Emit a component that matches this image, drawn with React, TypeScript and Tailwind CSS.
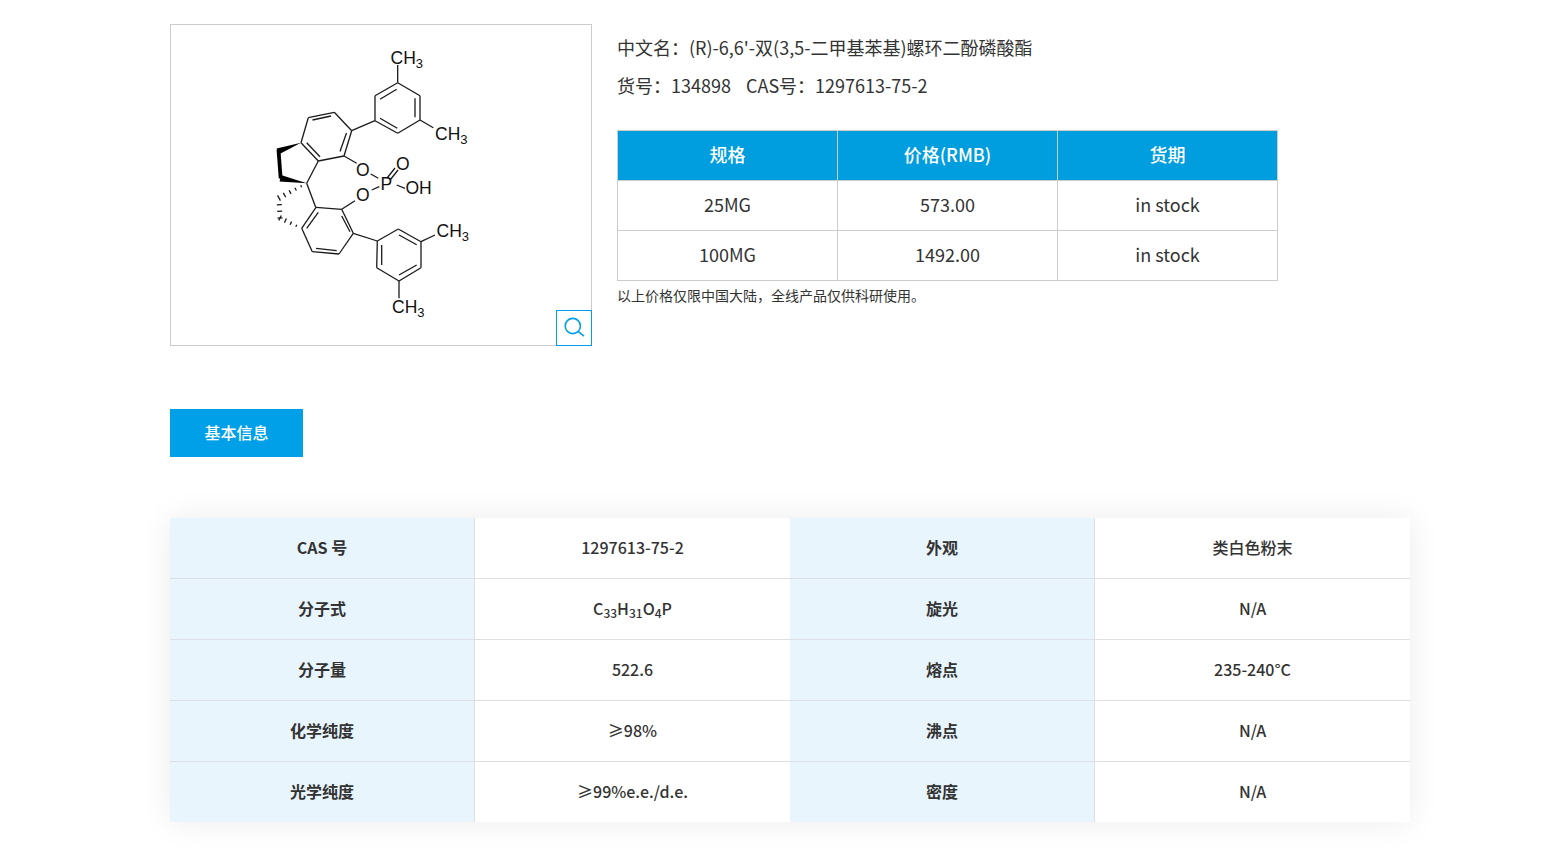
type Pt = [number, number];

// ring bonds + inner double bonds of the structure, in page coordinates
const bonds: [number, number, number, number][] = [
  // top aryl
  [397.7, 82.7, 420, 95.7], [420, 95.7, 420, 120], [420, 120, 397.7, 133.3], [397.7, 133.3, 375, 120.7], [375, 120.7, 375, 95.7], [375, 95.7, 397.7, 82.7],
  [380, 99.3, 396.7, 89.3], [415, 98.3, 415, 117.3], [380, 118.3, 397.3, 128.3],
  [397.7, 82.7, 397.7, 65], [420, 120, 433.3, 127.7], [375, 120.7, 351.7, 130.7],
  // upper benzo ring
  [351.7, 130.7, 334.3, 112.3], [334.3, 112.3, 308.3, 117.7], [308.3, 117.7, 301, 142.7], [301, 142.7, 318.3, 161], [318.3, 161, 344, 156], [344, 156, 351.7, 130.7],
  [312.5, 120, 331, 116], [346.5, 133, 340, 151.5], [306.7, 142.7, 320, 156.7],
  [318.3, 161, 306.7, 183.3], [306.7, 183.3, 315.7, 207.3],
  // lower benzo ring
  [316, 207.3, 341.7, 209.3], [341.7, 209.3, 353.3, 233.3], [353.3, 233.3, 339, 254], [339, 254, 312.3, 251.7], [312.3, 251.7, 301.7, 228.3], [301.7, 228.3, 316, 207.3],
  [306.7, 228.3, 318.3, 212.3], [316, 248.3, 336.7, 250.7], [341.7, 216, 350, 231.7],
  // lower aryl
  [353.3, 233.3, 377.3, 241],
  [377.3, 241, 398.3, 229], [398.3, 229, 421, 241.7], [421, 241.7, 421, 267.7], [421, 267.7, 399, 281], [399, 281, 376.7, 267.7], [376.7, 267.7, 377.3, 241],
  [381.7, 245, 381.7, 265], [399, 235, 416.7, 244.7], [399, 275, 416.7, 265],
  [421, 241.7, 435, 235], [399, 281, 399, 298.3],
  // phosphate
  [344, 156, 356.7, 163.3], [370.7, 174, 378.3, 178.3], [341.7, 209.3, 355, 200.7], [371.7, 190, 379.3, 186.7],
  [387.5, 177.5, 395, 168], [390.5, 179.5, 398, 170], [396.7, 185, 405, 188.3],
];

// hash marks across a bond, widening from a to b
function hashes(a: Pt, b: Pt, n: number, w0: number, w1: number) {
  const dx = b[0] - a[0];
  const dy = b[1] - a[1];
  const len = Math.hypot(dx, dy);
  const out: [number, number, number, number][] = [];
  for (let i = 1; i <= n; i++) {
    const t = i / n;
    const w = w0 + (w1 - w0) * t;
    const x = a[0] + dx * t;
    const y = a[1] + dy * t;
    out.push([x - (dy / len) * w, y + (dx / len) * w, x + (dy / len) * w, y - (dx / len) * w]);
  }
  return out;
}

const hashed = [
  ...hashes([306.7, 183.3], [279, 198], 5, 0.6, 3),
  ...hashes([279, 198], [280, 218], 3, 2.5, 2.5),
  ...hashes([301.7, 228.3], [280, 218], 4, 0.6, 2.8),
];

function Ch3({ x, y }: { x: number; y: number }) {
  return (
    <text x={x} y={y} fontSize={17.5} fill="#111" fontFamily="'Liberation Sans', sans-serif">
      CH<tspan fontSize={13} dy={4}>3</tspan>
    </text>
  );
}

function Atom({ x, y, label }: { x: number; y: number; label: string }) {
  return (
    <text x={x} y={y} fontSize={17.5} fill="#111" fontFamily="'Liberation Sans', sans-serif">
      {label}
    </text>
  );
}

function Molecule() {
  return (
    <svg width="420" height="320" viewBox="171 25 420 320">
      <g stroke="#1a1a1a" strokeWidth="1.3" fill="none">
        {bonds.map((b, i) => (
          <line key={i} x1={b[0]} y1={b[1]} x2={b[2]} y2={b[3]} />
        ))}
        {hashed.map((b, i) => (
          <line key={i} x1={b[0]} y1={b[1]} x2={b[2]} y2={b[3]} />
        ))}
      </g>
      <polygon points="301,142.7 276.6,148.5 278.6,154.5" fill="#000" />
      <polygon points="276.6,150 280.4,150 282.6,178.5 278.8,178.5" fill="#000" />
      <polygon points="306.7,183.3 281,175 279.6,181.4" fill="#000" />
      <Ch3 x={390.5} y={63.5} />
      <Ch3 x={435} y={139.5} />
      <Ch3 x={436.5} y={236.5} />
      <Ch3 x={392} y={312.5} />
      <Atom x={356} y={175.5} label="O" />
      <Atom x={356} y={201} label="O" />
      <Atom x={396} y={170} label="O" />
      <Atom x={380.5} y={190} label="P" />
      <Atom x={405.5} y={194} label="OH" />
    </svg>
  );
}

const specRows = [
  ["25MG", "573.00", "in stock"],
  ["100MG", "1492.00", "in stock"],
];

function Label({ children }: { children: React.ReactNode }) {
  return <div className="flex items-center justify-center bg-[#e8f5fc] pb-[2px] font-bold text-[#333]">{children}</div>;
}

function Value({ children }: { children: React.ReactNode }) {
  return <div className="flex items-center justify-center bg-white pb-[2px] font-medium text-[#333]">{children}</div>;
}

const infoRows: [string, React.ReactNode, string, string][] = [
  ["CAS 号", "1297613-75-2", "外观", "类白色粉末"],
  ["分子式", <span>C<sub>33</sub>H<sub>31</sub>O<sub>4</sub>P</span>, "旋光", "N/A"],
  ["分子量", "522.6", "熔点", "235-240°C"],
  ["化学纯度", "≥98%", "沸点", "N/A"],
  ["光学纯度", "≥99%e.e./d.e.", "密度", "N/A"],
];

export default function App() {
  return (
    <div className="min-h-[863px] bg-white pt-6 pb-[41px] font-['Noto_Sans_CJK_SC',sans-serif] text-[#333]">
      <div className="ml-[170px] w-[1240px]">
        <div className="flex items-start">
          <div className="relative flex h-[322px] w-[422px] shrink-0 items-center justify-center border border-[#ccc]">
            <Molecule />
            <div className="absolute -right-px -bottom-px flex h-9 w-9 items-center justify-center border border-[#00a0e9] bg-white">
              <svg width="24" height="24" viewBox="0 0 24 24" fill="none" stroke="#00a0e9" strokeWidth="1.6">
                <circle cx="10.8" cy="10" r="7.6" />
                <line x1="16.4" y1="15.6" x2="22" y2="20.2" />
              </svg>
            </div>
          </div>

          <div className="ml-[25px]">
            <p className="h-[38px] pt-1 text-lg leading-[38px]">中文名：(R)-6,6'-双(3,5-二甲基苯基)螺环二酚磷酸酯</p>
            <p className="h-[38px] pt-1 text-lg leading-[38px]">货号：134898<span className="ml-[15px]">CAS号：1297613-75-2</span></p>
            <table className="mt-[30px] w-[661px] table-fixed border-collapse text-lg">
              <thead>
                <tr className="h-[50px] bg-[#009ddf] text-white">
                  <th className="border border-[#ccc] pb-1 font-medium">规格</th>
                  <th className="border border-[#ccc] pb-1 font-medium">价格(RMB)</th>
                  <th className="border border-[#ccc] pb-1 font-medium">货期</th>
                </tr>
              </thead>
              <tbody>
                {specRows.map((row) => (
                  <tr key={row[0]} className="h-[50px]">
                    {row.map((cell, i) => (
                      <td key={i} className="border border-[#ccc] pb-1 text-center">{cell}</td>
                    ))}
                  </tr>
                ))}
              </tbody>
            </table>
            <p className="mt-1 text-sm leading-[20px]">以上价格仅限中国大陆，全线产品仅供科研使用。</p>
          </div>
        </div>

        <div className="mt-[63px] flex h-12 w-[133px] items-center justify-center bg-[#00a0e9] pb-[2px] text-base font-medium text-white">基本信息</div>

        <div className="mt-[61px] bg-white text-base shadow-[0_0_30px_rgba(0,0,0,0.08)]">
          {infoRows.map((row, i) => (
            <div key={i} className={`grid h-[61px] grid-cols-[304px_1px_315px_304px_1px_315px] last:h-[60px] ${i < infoRows.length - 1 ? "border-b border-[#dcdfe3]" : ""}`}>
              <Label>{row[0]}</Label>
              <div className="bg-[#dcdfe3]" />
              <Value>{row[1]}</Value>
              <Label>{row[2]}</Label>
              <div className="bg-[#dcdfe3]" />
              <Value>{row[3]}</Value>
            </div>
          ))}
        </div>
      </div>
    </div>
  );
}
